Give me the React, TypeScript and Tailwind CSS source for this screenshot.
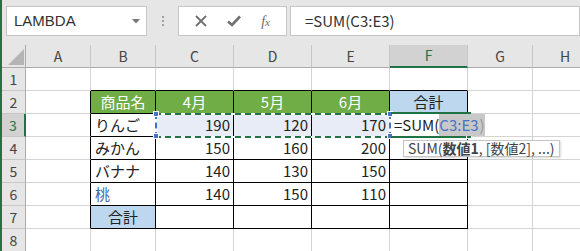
import React from "react";

const COLS = [
    { key: "A", w: 65 },
    { key: "B", w: 65 },
    { key: "C", w: 78 },
    { key: "D", w: 78 },
    { key: "E", w: 78 },
    { key: "F", w: 78 },
    { key: "G", w: 65 },
    { key: "H", w: 65 },
];

type Cell = { text?: string; align?: "left" | "right" | "center"; bg?: string; color?: string };

const DATA: Record<string, Cell> = {
    B2: { text: "商品名", align: "center", bg: "bg-[#70ad47]", color: "text-white" },
    C2: { text: "4月", align: "center", bg: "bg-[#70ad47]", color: "text-white" },
    D2: { text: "5月", align: "center", bg: "bg-[#70ad47]", color: "text-white" },
    E2: { text: "6月", align: "center", bg: "bg-[#70ad47]", color: "text-white" },
    F2: { text: "合計", align: "center", bg: "bg-[#bdd7ee]" },
    B3: { text: "りんご" },
    C3: { text: "190", align: "right", bg: "bg-[#e7ecf6]" },
    D3: { text: "120", align: "right", bg: "bg-[#e7ecf6]" },
    E3: { text: "170", align: "right", bg: "bg-[#e7ecf6]" },
    B4: { text: "みかん" },
    C4: { text: "150", align: "right" },
    D4: { text: "160", align: "right" },
    E4: { text: "200", align: "right" },
    B5: { text: "バナナ" },
    C5: { text: "140", align: "right" },
    D5: { text: "130", align: "right" },
    E5: { text: "150", align: "right" },
    B6: { text: "桃", color: "text-[#3e6db0]" },
    C6: { text: "140", align: "right" },
    D6: { text: "150", align: "right" },
    E6: { text: "110", align: "right" },
    B7: { text: "合計", align: "center", bg: "bg-[#bdd7ee]" },
};

const TABLE_COLS = ["B", "C", "D", "E", "F"];

function borderClasses(col: string, row: number) {
    const inTable = TABLE_COLS.includes(col) && row >= 2 && row <= 7;
    const right = inTable || (col === "A" && row >= 2 && row <= 7) ? "border-r-black" : "border-r-[#d4d4d4]";
    const bottom = inTable || (TABLE_COLS.includes(col) && row === 1) ? "border-b-black" : "border-b-[#d4d4d4]";
    return `${right} ${bottom}`;
}

function TopBar() {
    return (
        <div className="h-[45px] bg-[#e6e6e6] flex items-start pt-[6px] pl-[4px]">
            <div className="w-[141px] h-[30px] bg-white border border-[#c6c6c6] flex items-center justify-between pl-[7px] pr-[6px]">
                <span className="text-[15px] text-[#333] font-['Liberation_Sans',sans-serif]">LAMBDA</span>
                <svg width="8" height="5" viewBox="0 0 8 5">
                    <polygon points="0,0 8,0 4,4.5" fill="#777" />
                </svg>
            </div>
            <div className="w-[31px] h-[30px] flex flex-col items-center justify-center gap-[2px]">
                <span className="w-[2px] h-[2px] bg-[#a0a0a0]" />
                <span className="w-[2px] h-[2px] bg-[#a0a0a0]" />
                <span className="w-[2px] h-[2px] bg-[#a0a0a0]" />
            </div>
            <div className="w-[109px] h-[30px] bg-white border border-[#c6c6c6] flex items-center justify-around px-[6px]">
                <svg width="12" height="12" viewBox="0 0 12 12">
                    <path d="M1 1 L11 11 M11 1 L1 11" stroke="#707070" strokeWidth="1.8" />
                </svg>
                <svg width="14" height="12" viewBox="0 0 14 12">
                    <path d="M1 6.5 L5 10 L13 1.5" stroke="#707070" strokeWidth="2.6" fill="none" />
                </svg>
                <span className="text-[14px] italic text-[#6a6a6a] font-['Liberation_Serif',serif]">
                    f<span className="text-[11px]">x</span>
                </span>
            </div>
            <div className="ml-[3px] flex-1 h-[30px] bg-white border border-[#c6c6c6] flex items-center pl-[14px]">
                <span className="text-[15px] text-[#333] font-['Noto_Sans_CJK_JP',sans-serif]">=SUM(C3:E3)</span>
            </div>
        </div>
    );
}

export default function App() {
    return (
        <div className="w-[580px] h-[251px] overflow-hidden bg-white border-l-2 border-[#217346] font-['Noto_Sans_CJK_JP',sans-serif] text-[#222]">
            <TopBar />
            <div className="relative">
                {/* column headers */}
                <div className="flex h-[23px] bg-[#e6e6e6]">
                    <div className="w-[24px] shrink-0 h-full border-r border-b border-[#ababab] flex items-end justify-end pr-[1px] pb-[2px]">
                        <svg width="16" height="16" viewBox="0 0 16 16">
                            <polygon points="16,0 16,16 0,16" fill="#b4b4b4" />
                        </svg>
                    </div>
                    {COLS.map((c) => (
                        <div
                            key={c.key}
                            style={{ width: c.w }}
                            className={`shrink-0 h-full border-r border-r-[#c6c6c6] flex items-center justify-center text-[14px] ${
                                c.key === "F"
                                    ? "bg-[#d2d2d2] text-[#217346] border-b-2 border-b-[#217346]"
                                    : "text-[#444] border-b border-b-[#ababab]"
                            }`}
                        >
                            {c.key}
                        </div>
                    ))}
                </div>
                {/* rows */}
                {[1, 2, 3, 4, 5, 6, 7, 8].map((r) => (
                    <div key={r} className="flex h-[23px]">
                        <div
                            className={`w-[24px] shrink-0 h-full border-b border-b-[#c6c6c6] flex items-center justify-center text-[14px] ${
                                r === 3
                                    ? "bg-[#d2d2d2] text-[#217346] border-r-2 border-r-[#217346]"
                                    : "bg-[#e6e6e6] text-[#444] border-r border-r-[#ababab]"
                            }`}
                        >
                            {r}
                        </div>
                        {COLS.map((c) => {
                            const id = `${c.key}${r}`;
                            const cell = DATA[id] ?? {};
                            const align =
                                cell.align === "right" ? "justify-end pr-[3px]" : cell.align === "center" ? "justify-center" : "justify-start pl-[4px]";
                            return (
                                <div
                                    key={id}
                                    style={{ width: c.w }}
                                    className={`shrink-0 h-full border-r border-b flex items-center text-[15px] whitespace-nowrap ${borderClasses(c.key, r)} ${align} ${cell.bg ?? ""} ${cell.color ?? ""}`}
                                >
                                    {cell.text}
                                </div>
                            );
                        })}
                    </div>
                ))}

                {/* copy range C3:E3 marching ants */}
                <div className="absolute left-[153px] top-[68px] w-[236px] h-[25px] border-2 border-white" />
                <div className="absolute left-[153px] top-[68px] w-[236px] h-[25px] border-2 border-dashed border-[#217346] border-l-[#4472c4] border-r-[#4472c4]" />
                <span className="absolute left-[151px] top-[66px] w-[6px] h-[6px] bg-[#4472c4] border border-white" />
                <span className="absolute left-[151px] top-[88px] w-[6px] h-[6px] bg-[#4472c4] border border-white" />
                <span className="absolute left-[385px] top-[66px] w-[6px] h-[6px] bg-[#4472c4] border border-white" />
                <span className="absolute left-[385px] top-[88px] w-[6px] h-[6px] bg-[#4472c4] border border-white" />

                {/* active cell F3 */}
                <div className="absolute left-[389px] top-[67px] w-[80px] h-[26px] border-2 border-[#217346] border-l-0" />
                <span className="absolute left-[464px] top-[88px] w-[6px] h-[6px] bg-[#217346] border border-white" />
                <div className="absolute left-[392px] top-[69px] h-[22px] flex items-center text-[15px] whitespace-nowrap text-[#222]">
                    =SUM(
                    <span className="bg-[#c8c8c8] text-[#4472c4] pr-[1px]">C3:E3</span>
                    <span className="bg-[#c8c8c8] text-[#9a9a9a]">)</span>
                </div>

                {/* function tooltip */}
                <div className="absolute left-[401px] top-[95px] h-[17px] px-[4px] bg-white border border-[#c6c6c6] shadow-[1px_1px_2px_rgba(0,0,0,0.15)] flex items-center text-[14px] text-[#444] whitespace-nowrap">
                    SUM(<span className="font-bold">数値1</span>, [数値2], ...)
                </div>
            </div>
        </div>
    );
}
